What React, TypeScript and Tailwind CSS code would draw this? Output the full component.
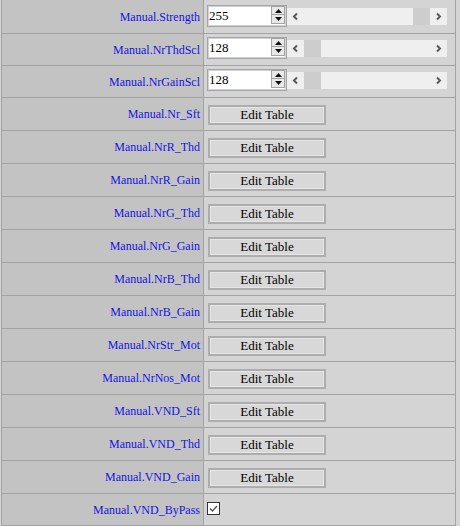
type Row =
  | { label: string; kind: "slider"; value: number; pos: number; h: string; pad: string }
  | { label: string; kind: "table"; h: string; pad: string }
  | { label: string; kind: "check"; checked: boolean; h: string; pad: string };

const rows: Row[] = [
  { label: "Manual.Strength", kind: "slider", value: 255, pos: 1, h: "h-[34px]", pad: "pt-[5px]" },
  { label: "Manual.NrThdScl", kind: "slider", value: 128, pos: 0, h: "h-[32px]", pad: "pt-[3px]" },
  { label: "Manual.NrGainScl", kind: "slider", value: 128, pos: 0, h: "h-[32px]", pad: "pt-[3px]" },
  { label: "Manual.Nr_Sft", kind: "table", h: "h-[33px]", pad: "pt-[4px]" },
  { label: "Manual.NrR_Thd", kind: "table", h: "h-[33px]", pad: "pt-[4px]" },
  { label: "Manual.NrR_Gain", kind: "table", h: "h-[33px]", pad: "pt-[4px]" },
  { label: "Manual.NrG_Thd", kind: "table", h: "h-[33px]", pad: "pt-[4px]" },
  { label: "Manual.NrG_Gain", kind: "table", h: "h-[33px]", pad: "pt-[4px]" },
  { label: "Manual.NrB_Thd", kind: "table", h: "h-[33px]", pad: "pt-[4px]" },
  { label: "Manual.NrB_Gain", kind: "table", h: "h-[33px]", pad: "pt-[4px]" },
  { label: "Manual.NrStr_Mot", kind: "table", h: "h-[33px]", pad: "pt-[4px]" },
  { label: "Manual.NrNos_Mot", kind: "table", h: "h-[33px]", pad: "pt-[4px]" },
  { label: "Manual.VND_Sft", kind: "table", h: "h-[33px]", pad: "pt-[4px]" },
  { label: "Manual.VND_Thd", kind: "table", h: "h-[33px]", pad: "pt-[4px]" },
  { label: "Manual.VND_Gain", kind: "table", h: "h-[33px]", pad: "pt-[4px]" },
  { label: "Manual.VND_ByPass", kind: "check", checked: true, h: "h-[32px]", pad: "pt-[8px]" },
];

const serif = "font-['Liberation_Serif','Times_New_Roman',serif]";

function Chevron({ dir }: { dir: "left" | "right" }) {
  return (
    <svg width="17" height="17" viewBox="0 0 17 17">
      <polyline
        points={dir === "left" ? "10,5.5 7,8.5 10,11.5" : "7,5.5 10,8.5 7,11.5"}
        fill="none"
        stroke="#5a5a5a"
        strokeWidth="2"
      />
    </svg>
  );
}

function Spinner() {
  return (
    <div className="flex flex-col w-[14px] h-[18px] mr-px">
      <div className="h-[9px] border border-[#a3a3a3] bg-[#e9e9e9] flex items-center justify-center">
        <svg width="7" height="4" viewBox="0 0 7 4">
          <polygon points="3.5,0 7,4 0,4" fill="#111" />
        </svg>
      </div>
      <div className="h-[9px] border border-t-0 border-[#a3a3a3] bg-[#e9e9e9] flex items-center justify-center">
        <svg width="7" height="4" viewBox="0 0 7 4">
          <polygon points="0,0 7,0 3.5,4" fill="#111" />
        </svg>
      </div>
    </div>
  );
}

function SliderCell({ value, pos }: { value: number; pos: number }) {
  const travel = 160 - 17 * 3;
  return (
    <div className="flex items-center">
      <div className="w-[80px] h-[22px] border border-[#a5a5a5] shadow-[inset_0_0_0_1px_#d2d2d2] bg-white flex items-start">
        <span className="flex-1 pl-[1px] pt-[1px] text-[13px] leading-[17px] text-black">{value}</span>
        <Spinner />
      </div>
      <div className="w-[160px] h-[17px] bg-[#efefef] flex">
        <Chevron dir="left" />
        <div className="flex-1 h-full">
          <div className="w-[17px] h-full bg-[#cdcdcd]" style={{ marginLeft: Math.round(travel * pos) }} />
        </div>
        <Chevron dir="right" />
      </div>
    </div>
  );
}

function EditButton() {
  return (
    <button className="ml-px w-[118px] h-[20px] border-2 border-[#adadad] bg-[#d8d8d8] shadow-[inset_0_0_0_1px_#e6e6e6] text-[13px] leading-[16px] text-black">
      Edit Table
    </button>
  );
}

function CheckBox({ checked }: { checked: boolean }) {
  return (
    <div className="w-[13px] h-[13px] border border-[#333] bg-white flex items-center justify-center">
      {checked && (
        <svg width="11" height="11" viewBox="0 0 11 11">
          <polyline points="2,5.5 4.5,8 9,3" fill="none" stroke="#555" strokeWidth="1.4" />
        </svg>
      )}
    </div>
  );
}

export default function App() {
  return (
    <div className={`w-[460px] h-[526px] bg-[#d4d4d4] overflow-hidden ${serif}`}>
      <div className="ml-px w-[455px] border-l border-r border-[#a3a3a3]">
        {rows.map((r) => (
          <div key={r.label} className={`flex border-b border-[#a3a3a3] ${r.h}`}>
            <div className="w-[202px] border-r border-[#a3a3a3] bg-[#c3c3c3] flex items-center justify-end pr-[3px] text-[12px] text-[#1414e0]">
              {r.label}
            </div>
            <div className={`flex-1 bg-[#d4d4d4] pl-[3px] ${r.pad}`}>
              {r.kind === "slider" && <SliderCell value={r.value} pos={r.pos} />}
              {r.kind === "table" && <EditButton />}
              {r.kind === "check" && <CheckBox checked={r.checked} />}
            </div>
          </div>
        ))}
      </div>
    </div>
  );
}
